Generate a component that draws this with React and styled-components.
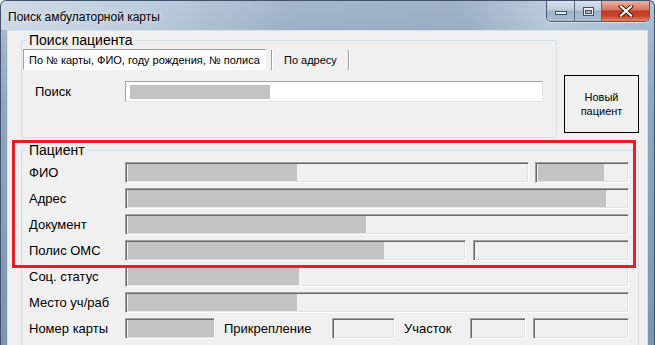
import React from "react";
import styled, { createGlobalStyle } from "styled-components";

const GlobalStyle = createGlobalStyle`
  html, body {
    margin: 0;
    padding: 0;
  }
  body {
    width: 655px;
    height: 345px;
    overflow: hidden;
    background: #f0f0f0;
    font-family: "Liberation Sans", Arial, sans-serif;
  }
`;

const Window = styled.div`
  position: relative;
  width: 655px;
  height: 345px;
  box-sizing: border-box;
  display: flex;
  flex-direction: column;
  border: 1px solid #42526a;
  border-bottom: none;
  border-radius: 6px 6px 0 0;
  overflow: hidden;
  background: linear-gradient(180deg, #a9bed4 0%, #8fa8c2 30%, #7b95b1 100%);
`;

const TitleBar = styled.div`
  height: 29px;
  flex: none;
  display: flex;
  align-items: flex-start;
  background: linear-gradient(
    90deg,
    rgba(255, 255, 255, 0.45) 0%,
    rgba(255, 255, 255, 0.25) 22%,
    rgba(0, 0, 0, 0.04) 45%,
    rgba(0, 0, 0, 0.06) 70%,
    rgba(255, 255, 255, 0.22) 84%,
    rgba(255, 255, 255, 0.05) 100%
  );
`;

const Title = styled.div`
  padding: 9px 0 0 7px;
  font-size: 12px;
  line-height: 14px;
  color: #000;
  text-shadow: 0 0 6px rgba(255, 255, 255, 0.9);
`;

const CaptionGroup = styled.div`
  margin-left: auto;
  margin-right: 4px;
  display: flex;
  height: 20px;
  border: 1px solid #4b5b70;
  border-top: none;
  border-radius: 0 0 5px 5px;
  overflow: hidden;
  box-shadow: 0 1px 0 rgba(255, 255, 255, 0.5);
`;

const CaptionBtn = styled.div`
  width: ${(p) => p.$w}px;
  display: flex;
  align-items: center;
  justify-content: center;
  border-left: ${(p) => (p.$first ? "none" : "1px solid #56677d")};
  background: ${(p) =>
    p.$close
      ? "linear-gradient(180deg, #eab1a3 0%, #d97a63 42%, #c13a22 52%, #c9452b 75%, #e1866a 100%)"
      : "linear-gradient(180deg, #d9e2ec 0%, #bccadb 45%, #9fb2c7 52%, #adbfd2 100%)"};
`;

const Body = styled.div`
  flex: 1;
  margin: 0 6px;
  background: #f0f0f0;
  border: 1px solid #d8e2ec;
  border-bottom: none;
  overflow: hidden;
`;

const TopRow = styled.div`
  display: flex;
  align-items: flex-start;
  margin: 1px 0 0 13px;
`;

const Group = styled.fieldset`
  box-sizing: border-box;
  width: ${(p) => p.$w}px;
  margin: 0;
  padding: ${(p) => p.$pad};
  border: 1px solid #d5dfe5;
  border-radius: 3px;
  min-width: 0;
`;

const PatientGroup = styled(Group)`
  margin: 4px 0 0 13px;
`;

const Legend = styled.legend`
  font-size: 14px;
  line-height: 16px;
  padding: 0 2px;
  margin-left: ${(p) => p.$ml}px;
  color: #000;
`;

const TabStrip = styled.div`
  display: flex;
  height: 21px;
  font-size: 11px;
  color: #000;
`;

const Tab = styled.div`
  display: flex;
  align-items: center;
  box-sizing: border-box;
  padding: ${(p) => (p.$active ? "0 0 0 5px" : "0 10px")};
  width: ${(p) => (p.$active ? "243px" : "auto")};
  background: ${(p) => (p.$active ? "#fbfbfb" : "transparent")};
  border: 1px solid ${(p) => (p.$active ? "#a0a0a0" : "transparent")};
  border-right-color: ${(p) => (p.$active ? "#fff" : "transparent")};
  border-bottom-color: ${(p) => (p.$active ? "#fff" : "transparent")};
  white-space: nowrap;
`;

const Separator = styled.div`
  width: 0;
  margin: 1px 0 0 ${(p) => p.$ml || 0}px;
  height: 20px;
  border-left: 1px solid #a0a0a0;
  border-right: 1px solid #fff;
`;

const SearchRow = styled.div`
  display: flex;
  align-items: center;
  margin-top: 11px;
  padding-left: 12px;
`;

const Label = styled.div`
  flex: none;
  width: ${(p) => p.$w}px;
  margin-left: ${(p) => p.$ml || 0}px;
  font-size: 13px;
  line-height: 16px;
  color: #000;
  white-space: nowrap;
`;

const Field = styled.div`
  box-sizing: border-box;
  flex: ${(p) => (p.$w ? "none" : "1")};
  width: ${(p) => (p.$w ? `${p.$w}px` : "auto")};
  height: 21px;
  margin-left: ${(p) => p.$ml || 0}px;
  padding: ${(p) => (p.$white ? "3px 2px 2px 3px" : "1px")};
  background: ${(p) => (p.$white ? "#fff" : "#f0f0f0")};
  border: 1px solid;
  border-color: ${(p) =>
    p.$white ? "#a0a0a0 #e3e3e3 #e3e3e3 #a0a0a0" : "#a0a0a0 #fff #fff #a0a0a0"};
  box-shadow: ${(p) =>
    p.$white ? "none" : "inset 1px 1px 0 #696969, inset -1px -1px 0 #e3e3e3"};
`;

const Fill = styled.div`
  height: 100%;
  margin-left: 1px;
  width: ${(p) => (p.$w === "full" ? "100%" : `${p.$w}px`)};
  background: #c3c3c3;
`;

const NewButton = styled.div`
  box-sizing: border-box;
  flex: none;
  width: 75px;
  height: 58px;
  margin: 43px 0 0 7px;
  display: flex;
  align-items: center;
  justify-content: center;
  text-align: center;
  border: 1px solid #000;
  background: #f0f0f0;
  font-size: 11px;
  line-height: 14px;
  color: #000;
`;

const Rows = styled.div`
  display: flex;
  flex-direction: column;
  gap: 5px;
`;

const Row = styled.div`
  display: flex;
  align-items: center;
  height: 21px;
`;

const RedFrame = styled.div`
  position: absolute;
  left: 11px;
  top: 139px;
  width: 624px;
  height: 128px;
  box-sizing: border-box;
  border: 3px solid #ed1c24;
  pointer-events: none;
`;

const MinIcon = () => (
  <svg width="14" height="12" viewBox="0 0 14 12">
    <rect x="1.5" y="6.5" width="11" height="3" fill="#e9eef4" stroke="#3c4d62" />
  </svg>
);

const MaxIcon = () => (
  <svg width="13" height="11" viewBox="0 0 13 11">
    <rect x="1.5" y="1.5" width="10" height="8" fill="#e9eef4" stroke="#3c4d62" />
    <rect x="3.5" y="4.5" width="6" height="3" fill="#a8b8ca" stroke="#3c4d62" />
  </svg>
);

const CloseIcon = () => (
  <svg width="16" height="12" viewBox="0 0 16 12">
    <path d="M3 1.5 L13 10.5 M13 1.5 L3 10.5" stroke="#4a1a12" strokeWidth="4.2" strokeLinecap="square" />
    <path d="M3 1.5 L13 10.5 M13 1.5 L3 10.5" stroke="#ffffff" strokeWidth="2.2" strokeLinecap="square" />
  </svg>
);

const App = () => {
  return (
    <>
      <GlobalStyle />
      <Window>
        <TitleBar>
          <Title>Поиск амбулаторной карты</Title>
          <CaptionGroup>
            <CaptionBtn $w={27} $first>
              <MinIcon />
            </CaptionBtn>
            <CaptionBtn $w={26}>
              <MaxIcon />
            </CaptionBtn>
            <CaptionBtn $w={47} $close>
              <CloseIcon />
            </CaptionBtn>
          </CaptionGroup>
        </TitleBar>
        <Body>
          <TopRow>
            <Group $w={536} $pad="1px 0 35px 1px">
              <Legend $ml={4}>Поиск пациента</Legend>
              <TabStrip>
                <Tab $active>По № карты, ФИО, году рождения, № полиса</Tab>
                <Separator $ml={5} />
                <Tab>По адресу</Tab>
                <Separator />
              </TabStrip>
              <SearchRow>
                <Label $w={90}>Поиск</Label>
                <Field $w={418} $white>
                  <Fill $w={140} />
                </Field>
              </SearchRow>
            </Group>
            <NewButton>
              Новый
              <br />
              пациент
            </NewButton>
          </TopRow>
          <PatientGroup $w={618} $pad="4px 9px 10px 7px">
            <Legend $ml={-2}>Пациент</Legend>
            <Rows>
              <Row>
                <Label $w={96}>ФИО</Label>
                <Field>
                  <Fill $w={169} />
                </Field>
                <Field $w={94} $ml={6}>
                  <Fill $w={66} />
                </Field>
              </Row>
              <Row>
                <Label $w={96}>Адрес</Label>
                <Field>
                  <Fill $w={478} />
                </Field>
              </Row>
              <Row>
                <Label $w={96}>Документ</Label>
                <Field>
                  <Fill $w={238} />
                </Field>
              </Row>
              <Row>
                <Label $w={96}>Полис ОМС</Label>
                <Field>
                  <Fill $w={256} />
                </Field>
                <Field $w={156} $ml={7} />
              </Row>
              <Row>
                <Label $w={96}>Соц. статус</Label>
                <Field>
                  <Fill $w={171} />
                </Field>
              </Row>
              <Row>
                <Label $w={96}>Место уч/раб</Label>
                <Field>
                  <Fill $w={169} />
                </Field>
              </Row>
              <Row>
                <Label $w={96}>Номер карты</Label>
                <Field $w={90}>
                  <Fill $w="full" />
                </Field>
                <Label $w={108} $ml={9}>
                  Прикрепление
                </Label>
                <Field $w={63} />
                <Label $w={66} $ml={9}>
                  Участок
                </Label>
                <Field $w={56} />
                <Field $ml={7} />
              </Row>
            </Rows>
          </PatientGroup>
        </Body>
        <RedFrame />
      </Window>
    </>
  );
};

export default App;
